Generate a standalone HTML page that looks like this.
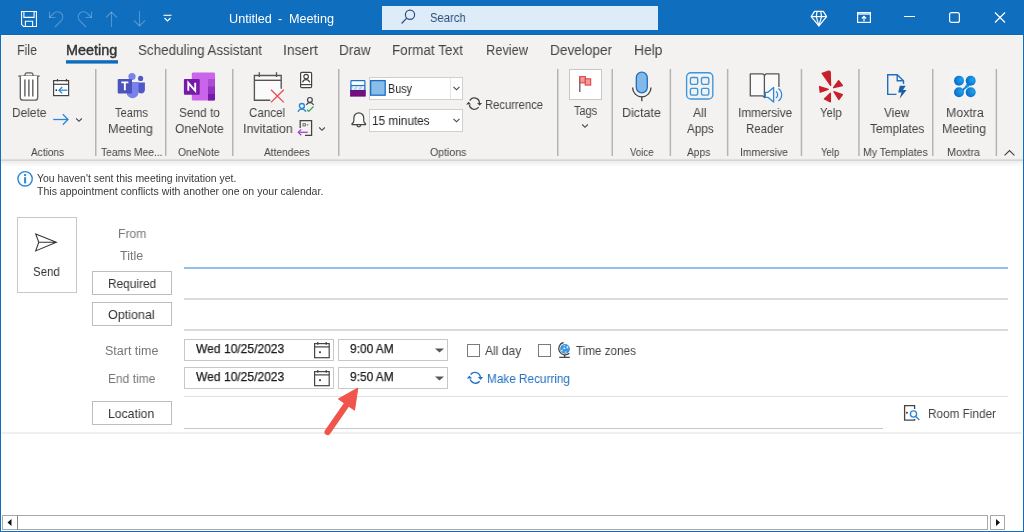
<!DOCTYPE html><html><head><meta charset="utf-8"><style>
html,body{margin:0;padding:0;width:1024px;height:532px;overflow:hidden;background:#fff}
.t{position:absolute;font-family:"Liberation Sans",sans-serif;line-height:1;white-space:nowrap;will-change:transform;transform-origin:0 0}
.b{position:absolute;box-sizing:border-box}
svg.b{overflow:visible}
</style></head><body>
<div class="b" style="left:0px;top:0px;width:1024px;height:35px;background:#106ebe"></div>
<div class="b" style="left:0px;top:34px;width:1024px;height:1px;background:#0b67b8"></div>
<div class="b" style="left:0px;top:35px;width:1024px;height:1px;background:#f7f6f5"></div>
<div class="b" style="left:0px;top:36px;width:1024px;height:122px;background:#f3f2f1"></div>
<div class="b" style="left:1px;top:158px;width:1022px;height:1px;background:#f1f0ef"></div>
<div class="b" style="left:1px;top:159px;width:1022px;height:1px;background:#e0dfde"></div>
<div class="b" style="left:1px;top:160px;width:1022px;height:1px;background:#d6d5d4"></div>
<div class="b" style="left:1px;top:161px;width:1022px;height:6px;background:linear-gradient(#eeedec,#ffffff)"></div>
<svg class="b" style="left:20px;top:10px" width="18" height="18" viewBox="0 0 18 18"><g fill="none" stroke="#ffffff" stroke-width="1.1">
<path d="M1.55 1.55 H16.45 V16.45 H3.5 L1.55 14.5 Z"/>
<path d="M3.9 1.55 V7.4 H14.1 V1.55"/>
<path d="M5.4 16.45 V11.3 H12.6 V16.45"/></g></svg>
<svg class="b" style="left:48px;top:10px" width="18" height="18" viewBox="0 0 18 18"><g fill="none" stroke="rgba(255,255,255,0.27)" stroke-width="1.1">
<path d="M1.5 1.5 V7.5 H7.5"/>
<path d="M1.5 7.5 L5.5 3.5 A5.2 5.2 0 0 1 13.5 10.5 L7 17"/></g></svg>
<svg class="b" style="left:76px;top:10px" width="18" height="18" viewBox="0 0 18 18"><g fill="none" stroke="rgba(255,255,255,0.27)" stroke-width="1.1" transform="translate(17,0) scale(-1,1)">
<path d="M1.5 1.5 V7.5 H7.5"/>
<path d="M1.5 7.5 L5.5 3.5 A5.2 5.2 0 0 1 13.5 10.5 L7 17"/></g></svg>
<svg class="b" style="left:104px;top:10px" width="16" height="18" viewBox="0 0 16 18"><g fill="none" stroke="rgba(255,255,255,0.27)" stroke-width="1.1">
<path d="M7.5 2 V17"/><path d="M2 7.5 L7.5 2 L13 7.5"/></g></svg>
<svg class="b" style="left:131px;top:10px" width="16" height="18" viewBox="0 0 16 18"><g fill="none" stroke="rgba(255,255,255,0.27)" stroke-width="1.1">
<path d="M8.5 1 V16"/><path d="M3 10.5 L8.5 16 L14 10.5"/></g></svg>
<svg class="b" style="left:162px;top:13px" width="12" height="10" viewBox="0 0 12 10"><g fill="none" stroke="#ffffff" stroke-width="1.1">
<path d="M1.5 2.3 H9.5"/><path d="M2.5 5 L5.5 8 L8.5 5"/></g></svg>
<div class="t" style="left:229.00px;top:13.00px;font-size:12.65px;color:#ffffff;">Untitled</div>
<div class="t" style="left:278.30px;top:13.00px;font-size:12.65px;color:#ffffff;">-</div>
<div class="t" style="left:288.61px;top:13.00px;font-size:12.65px;color:#ffffff;transform:scaleX(0.9930);">Meeting</div>
<div class="b" style="left:382px;top:6px;width:276px;height:24px;background:#deecf9"></div>
<svg class="b" style="left:400px;top:8px" width="18" height="18" viewBox="0 0 18 18"><g fill="none" stroke="#2b4f7e" stroke-width="1.2">
<circle cx="10" cy="6.8" r="4.6"/><path d="M6.7 10.1 L1.6 15.5"/></g></svg>
<div class="t" style="left:429.90px;top:12.00px;font-size:12.5px;color:#2b4f7e;transform:scaleX(0.9000);">Search</div>
<svg class="b" style="left:809px;top:9px" width="20" height="19" viewBox="0 0 20 19"><g fill="none" stroke="#ffffff" stroke-width="1.2" stroke-linejoin="round">
<path d="M5.5 2.4 H14.3 L17.6 7.6 L9.9 16.9 L2.2 7.6 Z"/>
<path d="M2.2 7.6 H17.6"/><path d="M8 2.4 L7.3 7.6 L9.9 16.9 L12.5 7.6 L11.8 2.4"/></g></svg>
<svg class="b" style="left:856px;top:11px" width="16" height="13" viewBox="0 0 16 13"><g fill="none" stroke="#ffffff" stroke-width="1.2">
<rect x="1.6" y="1.6" width="12.8" height="9.8"/>
<path d="M8 10.5 V5.5"/><path d="M5.8 7.5 L8 5.3 L10.2 7.5"/></g>
<rect x="1.6" y="1.6" width="12.8" height="2.4" fill="#ffffff" opacity="0.65"/></svg>
<div class="b" style="left:904px;top:16px;width:11px;height:1.3px;background:#ffffff"></div>
<svg class="b" style="left:948px;top:11px" width="13" height="13" viewBox="0 0 13 13"><rect x="1.6" y="1.6" width="9.8" height="9.8" rx="2" fill="none" stroke="#ffffff" stroke-width="1.2"/></svg>
<svg class="b" style="left:993px;top:11px" width="14" height="13" viewBox="0 0 14 13"><path d="M2 1.5 L12 11.5 M12 1.5 L2 11.5" stroke="#ffffff" stroke-width="1.2" fill="none"/></svg>
<div class="t" style="left:17.44px;top:43.00px;font-size:14.39px;color:#444444;transform:scaleX(0.8591);">File</div>
<div class="t" style="left:137.57px;top:43.00px;font-size:14.39px;color:#444444;transform:scaleX(0.9341);">Scheduling Assistant</div>
<div class="t" style="left:282.84px;top:43.00px;font-size:14.39px;color:#444444;transform:scaleX(0.9629);">Insert</div>
<div class="t" style="left:338.56px;top:43.00px;font-size:14.39px;color:#444444;transform:scaleX(0.9394);">Draw</div>
<div class="t" style="left:392.26px;top:43.00px;font-size:14.39px;color:#444444;transform:scaleX(0.9373);">Format Text</div>
<div class="t" style="left:486.11px;top:43.00px;font-size:14.39px;color:#444444;transform:scaleX(0.8913);">Review</div>
<div class="t" style="left:550.45px;top:43.00px;font-size:14.39px;color:#444444;transform:scaleX(0.9469);">Developer</div>
<div class="t" style="left:634.04px;top:43.00px;font-size:14.39px;color:#444444;transform:scaleX(0.9607);">Help</div>
<div class="t" style="left:65.90px;top:43.00px;font-size:14.39px;color:#333333;transform:scaleX(1.0020);-webkit-text-stroke:0.4px #333333">Meeting</div>
<svg class="b" style="left:0;top:0" width="200" height="70"><rect x="66" y="60.2" width="52" height="3.4" fill="#0f6cbd"/></svg>
<svg class="b" style="left:0;top:0" width="1024" height="532"><rect x="95.0" y="69" width="1.5" height="87" fill="#b4b4b4"/><rect x="165.0" y="69" width="1.5" height="87" fill="#b4b4b4"/><rect x="232.0" y="69" width="1.5" height="87" fill="#b4b4b4"/><rect x="338.0" y="69" width="1.5" height="87" fill="#b4b4b4"/><rect x="557.0" y="69" width="1.5" height="87" fill="#b4b4b4"/><rect x="611.5" y="69" width="1.5" height="87" fill="#b4b4b4"/><rect x="669.6" y="69" width="1.5" height="87" fill="#b4b4b4"/><rect x="726.9" y="69" width="1.5" height="87" fill="#b4b4b4"/><rect x="800.7" y="69" width="1.5" height="87" fill="#b4b4b4"/><rect x="858.2" y="69" width="1.5" height="87" fill="#b4b4b4"/><rect x="932.0" y="69" width="1.5" height="87" fill="#b4b4b4"/><rect x="995.6" y="69" width="1.5" height="87" fill="#b4b4b4"/></svg>
<div class="t" style="left:31.20px;top:147.00px;font-size:11.05px;color:#444444;transform:scaleX(0.9111);">Actions</div>
<div class="t" style="left:100.70px;top:147.00px;font-size:11.05px;color:#444444;transform:scaleX(0.9277);">Teams Mee...</div>
<div class="t" style="left:178.30px;top:147.00px;font-size:11.05px;color:#444444;transform:scaleX(0.9409);">OneNote</div>
<div class="t" style="left:263.50px;top:147.00px;font-size:11.05px;color:#444444;transform:scaleX(0.9204);">Attendees</div>
<div class="t" style="left:430.00px;top:147.00px;font-size:11.05px;color:#444444;transform:scaleX(0.9553);">Options</div>
<div class="t" style="left:629.60px;top:147.00px;font-size:11.05px;color:#444444;transform:scaleX(0.8704);">Voice</div>
<div class="t" style="left:687.30px;top:147.00px;font-size:11.05px;color:#444444;transform:scaleX(0.9240);">Apps</div>
<div class="t" style="left:740.36px;top:147.00px;font-size:11.05px;color:#444444;transform:scaleX(0.9429);">Immersive</div>
<div class="t" style="left:820.80px;top:147.00px;font-size:11.05px;color:#444444;transform:scaleX(0.8667);">Yelp</div>
<div class="t" style="left:862.95px;top:147.00px;font-size:11.05px;color:#444444;transform:scaleX(0.9537);">My Templates</div>
<div class="t" style="left:947.12px;top:147.00px;font-size:11.05px;color:#444444;transform:scaleX(0.9788);">Moxtra</div>
<svg class="b" style="left:16px;top:70px" width="26" height="32" viewBox="0 0 26 32"><g fill="none" stroke="#5f5f5f" stroke-width="1.3">
<path d="M2.3 6.1 H23.6"/><path d="M9 6 V4.5 A2 2 0 0 1 11 2.8 H15 A2 2 0 0 1 17 4.5 V6"/>
<path d="M4.3 6.1 V27.5 A2.7 2.7 0 0 0 7 30.2 H19 A2.7 2.7 0 0 0 21.7 27.5 V6.1" fill="#fff"/>
<path d="M8.9 9.6 V26.5 M12.9 9.6 V26.5 M16.8 9.6 V26.5" stroke-width="1.4"/></g></svg>
<div class="t" style="left:12.29px;top:106.00px;font-size:13.08px;color:#444444;transform:scaleX(0.9111);">Delete</div>
<svg class="b" style="left:52px;top:78px" width="18" height="19" viewBox="0 0 18 19"><g fill="none" stroke="#444" stroke-width="1.2">
<rect x="1.6" y="2.6" width="15" height="15" fill="#fff"/>
<path d="M1.6 6.3 H16.6"/><path d="M5.5 1 V3.5 M14.5 1 V3.5"/></g>
<circle cx="4.3" cy="12.2" r="0.9" fill="#333"/>
<g fill="none" stroke="#2b88d8" stroke-width="1.3"><path d="M7 12.2 H15.3"/><path d="M10.2 9 L7 12.2 L10.2 15.4"/></g></svg>
<svg class="b" style="left:52px;top:112px" width="18" height="14" viewBox="0 0 18 14"><g fill="none" stroke="#2b88d8" stroke-width="1.3"><path d="M1.2 7.5 H16"/><path d="M10.8 2.3 L16 7.5 L10.8 12.7"/></g></svg>
<svg class="b" style="left:75px;top:117px" width="8" height="6" viewBox="0 0 8 6"><path d="M1.2 1.5 L4 4.3 L6.8 1.5" fill="none" stroke="#444" stroke-width="1.1"/></svg>
<svg class="b" style="left:116px;top:70px" width="32" height="30" viewBox="0 0 32 30">
<circle cx="16" cy="6.5" r="3.6" fill="#7b83eb"/>
<circle cx="24.6" cy="8.4" r="2.6" fill="#5059c9"/>
<path d="M21.3 12.6 H28.9 V19.5 A4 4 0 0 1 24.9 23.5 A4 4 0 0 1 21.3 21 Z" fill="#5059c9"/>
<path d="M10.6 12 H22.5 V22.2 A6 6 0 0 1 16.5 28.2 A6 6 0 0 1 10.6 22.2 Z" fill="#7b83eb"/>
<rect x="1.7" y="9.1" width="14.3" height="14.3" rx="1" fill="#4b53bc"/>
<path d="M5.3 12.4 H12.4 M8.85 12.4 V20.2" stroke="#fff" stroke-width="1.9" fill="none"/></svg>
<div class="t" style="left:114.80px;top:106.00px;font-size:13.08px;color:#444444;transform:scaleX(0.8553);">Teams</div>
<div class="t" style="left:108.04px;top:122.00px;font-size:13.08px;color:#444444;transform:scaleX(0.9644);">Meeting</div>
<svg class="b" style="left:182px;top:71px" width="35" height="31" viewBox="0 0 35 31">
<rect x="9.8" y="1.4" width="23.2" height="28.2" rx="1.3" fill="#ca64ea"/>
<rect x="26" y="8" width="7" height="7.3" fill="#ae4bd5"/>
<rect x="26" y="15.3" width="7" height="7.2" fill="#9332bf"/>
<path d="M26 22.5 H33 V28.3 A1.3 1.3 0 0 1 31.7 29.6 H26 Z" fill="#7719aa"/>
<rect x="1.9" y="7.9" width="15.8" height="15.9" rx="1" fill="#7719aa"/>
<path d="M6.3 19.8 V11.8 L13.2 19.8 V11.8" stroke="#fff" stroke-width="1.9" fill="none"/></svg>
<div class="t" style="left:178.89px;top:106.00px;font-size:13.08px;color:#444444;transform:scaleX(0.9068);">Send to</div>
<div class="t" style="left:174.57px;top:122.00px;font-size:13.08px;color:#444444;transform:scaleX(0.9314);">OneNote</div>
<svg class="b" style="left:252px;top:71px" width="34" height="33" viewBox="0 0 34 33"><g fill="none" stroke="#555" stroke-width="1.35">
<path d="M18.3 29.2 H2.4 V4.5 H29.2 V17.7" fill="#fafafa"/>
<path d="M2.4 9.3 H29.2"/><path d="M7.3 1.2 V6 M24.5 1.2 V6"/></g>
<path d="M19 18.7 L31.8 31.4 M31.8 18.7 L19 31.4" stroke="#e8474c" stroke-width="1.2" fill="none"/></svg>
<div class="t" style="left:249.41px;top:106.00px;font-size:13.08px;color:#444444;transform:scaleX(0.8872);">Cancel</div>
<div class="t" style="left:242.55px;top:122.00px;font-size:13.08px;color:#444444;transform:scaleX(0.9510);">Invitation</div>
<svg class="b" style="left:299px;top:71px" width="14" height="18" viewBox="0 0 14 18"><g fill="none" stroke="#444" stroke-width="1.2">
<rect x="1.6" y="1.4" width="11" height="15.2" rx="1.2" fill="#fff"/><path d="M1.6 13.6 H12.6"/>
<circle cx="7.1" cy="5.6" r="2.3"/><path d="M3.6 11.3 A3.6 3.6 0 0 1 10.6 11.3"/></g></svg>
<svg class="b" style="left:296px;top:95px" width="19" height="18" viewBox="0 0 19 18">
<g fill="none" stroke="#444" stroke-width="1.2"><circle cx="13.9" cy="4.9" r="2.4"/><path d="M10.3 9.9 A4 4 0 0 1 17.6 9.9"/></g>
<g fill="none" stroke="#2b88d8" stroke-width="1.4"><circle cx="5.9" cy="11" r="2.5" fill="#f3f2f1"/><path d="M2 16.8 A4.2 4.2 0 0 1 9.8 16.8"/></g>
<path d="M10.9 14.8 L12.7 16.4 L17.5 11.5" stroke="#3ba655" stroke-width="1.3" fill="none"/></svg>
<svg class="b" style="left:297px;top:119px" width="16" height="18" viewBox="0 0 16 18"><g fill="none" stroke="#444" stroke-width="1.25">
<path d="M3.2 9 V1.5 H14.6 V16.4 H8"/></g>
<rect x="6" y="4.7" width="2.4" height="2.2" fill="none" stroke="#666" stroke-width="0.9"/><path d="M9.8 5.9 H11.4" stroke="#666" stroke-width="1"/>
<g fill="none" stroke="#a349c8" stroke-width="1.3"><path d="M1.3 13.3 H10.8"/><path d="M4.2 10.4 L1.3 13.3 L4.2 16.2"/></g></svg>
<svg class="b" style="left:318px;top:126px" width="8" height="6" viewBox="0 0 8 6"><path d="M1.2 1.5 L4 4.3 L6.8 1.5" fill="none" stroke="#444" stroke-width="1.1"/></svg>
<svg class="b" style="left:349px;top:79px" width="19" height="19" viewBox="0 0 19 19">
<rect x="1.9" y="1.7" width="14" height="5" fill="#fff"/>
<rect x="1.4" y="6.6" width="15" height="5" fill="#bcdaf3"/>
<path d="M3.4 10.8 L5.6 7.2 M8 10.8 L10.2 7.2 M12.6 10.8 L14.8 7.2" stroke="#fff" stroke-width="1.1"/>
<rect x="1.9" y="1.7" width="14" height="9.9" rx="0.6" fill="none" stroke="#1f73c7" stroke-width="1.2"/>
<path d="M1.9 6.5 H15.9" stroke="#1f73c7" stroke-width="1.1"/>
<rect x="1.3" y="11.4" width="15.1" height="5.8" fill="#760d80" stroke="#5c0a66" stroke-width="0.6"/></svg>
<div class="b" style="left:369px;top:77px;width:94px;height:23px;background:#fff;border:1px solid #cfcfcf"></div>
<div class="b" style="left:450px;top:78px;width:1px;height:21px;background:#e6e6e6"></div>
<svg class="b" style="left:369px;top:79px" width="19" height="19" viewBox="0 0 19 19"><rect x="1.6" y="1.6" width="14.6" height="14.6" fill="#88bdea" stroke="#1b6ec2" stroke-width="1.3"/></svg>
<div class="t" style="left:387.72px;top:83.00px;font-size:12.21px;color:#262626;transform:scaleX(0.8846);">Busy</div>
<svg class="b" style="left:452px;top:85px" width="9" height="7" viewBox="0 0 9 7"><path d="M1.5 1.8 L4.5 4.8 L7.5 1.8" fill="none" stroke="#444" stroke-width="1.1"/></svg>
<svg class="b" style="left:349px;top:110px" width="19" height="20" viewBox="0 0 19 20"><path d="M3 14.6 V13.8 Q4.9 12.5 4.9 10.5 V7.7 A4.9 4.9 0 0 1 14.7 7.7 V10.5 Q14.7 12.5 16.6 13.8 V14.6 Z" fill="#fafafa" stroke="#444" stroke-width="1.2" stroke-linejoin="round"/>
<path d="M8 15 A1.8 1.8 0 0 0 11.6 15" fill="none" stroke="#444" stroke-width="1.2"/></svg>
<div class="b" style="left:369px;top:109px;width:94px;height:23px;background:#fff;border:1px solid #cfcfcf"></div>
<div class="t" style="left:371.93px;top:115.00px;font-size:12.21px;color:#262626;transform:scaleX(0.9655);">15 minutes</div>
<svg class="b" style="left:452px;top:117px" width="9" height="7" viewBox="0 0 9 7"><path d="M1.5 1.8 L4.5 4.8 L7.5 1.8" fill="none" stroke="#444" stroke-width="1.1"/></svg>
<svg class="b" style="left:462px;top:92px" width="26" height="22" viewBox="0 0 26 22"><g fill="none" stroke="#444" stroke-width="1.25">
<path d="M7.8 8.6 A5.1 5.1 0 0 1 17.4 11.3"/><path d="M16.6 15.2 A5.1 5.1 0 0 1 7.4 13.1"/></g>
<g fill="#444"><path d="M15.1 10.9 H20.1 L17.6 13.8 Z"/><path d="M4.1 12.5 H9.1 L6.6 9.7 Z"/></g></svg>
<div class="t" style="left:485.08px;top:99.00px;font-size:12.21px;color:#444444;transform:scaleX(0.9194);">Recurrence</div>
<div class="b" style="left:569px;top:69px;width:33px;height:31px;background:#fff;border:1px solid #c8c8c8"></div>
<svg class="b" style="left:577px;top:74px" width="16" height="20" viewBox="0 0 16 20"><path d="M2.8 2.5 V18" stroke="#666" stroke-width="1.4"/>
<rect x="2.9" y="2.6" width="5.5" height="6.3" fill="#f19a9a" stroke="#e03a3a" stroke-width="1"/>
<rect x="8.2" y="4.8" width="5.5" height="6.3" fill="#f19a9a" stroke="#e03a3a" stroke-width="1"/></svg>
<div class="t" style="left:574.00px;top:105.00px;font-size:12.5px;color:#444444;transform:scaleX(0.8731);">Tags</div>
<svg class="b" style="left:581px;top:123px" width="8" height="6" viewBox="0 0 8 6"><path d="M1.2 1.5 L4 4.3 L6.8 1.5" fill="none" stroke="#444" stroke-width="1.1"/></svg>
<svg class="b" style="left:630px;top:70px" width="24" height="33" viewBox="0 0 24 33"><rect x="6.3" y="2.2" width="11" height="20.6" rx="5.5" fill="#83b9e9" stroke="#1f6fc0" stroke-width="1.3"/>
<g fill="none" stroke="#444" stroke-width="1.35"><path d="M2.6 17.6 A9.2 9.2 0 0 0 21 17.6"/><path d="M11.8 26.6 V31.3"/></g></svg>
<div class="t" style="left:622.45px;top:106.00px;font-size:13.08px;color:#444444;transform:scaleX(0.9538);">Dictate</div>
<svg class="b" style="left:684px;top:70px" width="31" height="31" viewBox="0 0 31 31"><g fill="none" stroke="#3a96dd" stroke-width="1.35">
<rect x="2.6" y="2.7" width="26.2" height="26.3" rx="4.3"/>
<rect x="6.4" y="7.5" width="7.3" height="6.8" rx="1.5"/><rect x="17.5" y="7.5" width="7.3" height="6.8" rx="1.5"/>
<rect x="6.4" y="18.3" width="7.3" height="6.8" rx="1.5"/><rect x="17.5" y="18.3" width="7.3" height="6.8" rx="1.5"/></g></svg>
<div class="t" style="left:693.00px;top:106.00px;font-size:13.08px;color:#444444;transform:scaleX(0.9286);">All</div>
<div class="t" style="left:687.00px;top:122.00px;font-size:13.08px;color:#444444;transform:scaleX(0.8966);">Apps</div>
<svg class="b" style="left:744px;top:66px" width="40" height="40" viewBox="0 0 40 40"><path d="M20.4 9.4 L18.7 7.8 H6.3 V29.9 H18.2 L20.4 31.6 L34.9 25 V7.8 H22.2 Z" fill="#fafafa"/>
<g fill="none" stroke="#555" stroke-width="1.3" stroke-linejoin="round">
<path d="M20.4 9.4 L18.7 7.8 H6.3 V29.9 H18.2 Q19.9 30.1 20.4 31.6 V9.4 L22.2 7.8 H34.9 V21"/></g>
<path d="M21.3 26.3 H23.9 L29.6 21.4 V36 L23.9 31.3 H21.3 Z" fill="#fafafa" stroke="#2b88d8" stroke-width="1.3" stroke-linejoin="round"/>
<g fill="none" stroke="#2b88d8" stroke-width="1.2"><path d="M31.9 25.3 A4.2 4.2 0 0 1 31.9 32.1"/><path d="M34.4 22.5 A7.6 7.6 0 0 1 34.4 35"/></g></svg>
<div class="t" style="left:737.80px;top:106.00px;font-size:13.08px;color:#444444;transform:scaleX(0.8983);">Immersive</div>
<div class="t" style="left:746.12px;top:122.00px;font-size:13.08px;color:#444444;transform:scaleX(0.8762);">Reader</div>
<svg class="b" style="left:814px;top:66px" width="34" height="40" viewBox="0 0 34 40"><g fill="#c8202a" stroke="#c8202a" stroke-width="1.3" stroke-linejoin="round">
<path d="M8.2 7.4 L14.6 5.2 Q16 4.9 16.2 6.3 L16.6 19.4 Z"/>
<path d="M19.6 21.6 L24.6 14.6 L28.4 19.5 Z"/>
<path d="M5.6 20.5 L14.2 23.3 L6.2 26.2 Z"/>
<path d="M19.9 25.7 L28.4 28.6 L24.8 33.5 Z"/>
<path d="M16.4 27.3 L16.4 35.8 L10.4 33 Z"/></g></svg>
<div class="t" style="left:819.90px;top:106.00px;font-size:13.08px;color:#444444;transform:scaleX(0.8640);">Yelp</div>
<svg class="b" style="left:885px;top:72px" width="23" height="28" viewBox="0 0 23 28"><g fill="none" stroke="#1f6fc0" stroke-width="1.4">
<path d="M11.5 22.4 H2.7 V2.7 H12.2 L18.5 8.7 V12"/><path d="M12.2 2.9 V8.7 H18.4"/></g>
<path d="M14.8 13.8 H20.7 L18 18 H21.6 L14.6 26.8 L16.5 20.4 H13.2 Z" fill="#1a5fa8"/></svg>
<div class="t" style="left:883.80px;top:106.00px;font-size:13.08px;color:#444444;transform:scaleX(0.9000);">View</div>
<div class="t" style="left:869.50px;top:122.00px;font-size:13.08px;color:#444444;transform:scaleX(0.9119);">Templates</div>
<svg class="b" style="left:944px;top:66px" width="40" height="40" viewBox="0 0 40 40"><defs><radialGradient id="mx" cx="0.7" cy="0.4" r="0.8"><stop offset="0" stop-color="#1aa6ea"/><stop offset="1" stop-color="#0b5fc9"/></radialGradient>
<linearGradient id="mxb" x1="0" y1="1" x2="1" y2="0"><stop offset="0" stop-color="#0f78d8"/><stop offset="1" stop-color="#19a3e9"/></linearGradient></defs>
<rect x="5" y="4" width="31" height="31" rx="5" fill="#f5f4f3"/>
<path d="M17.5 23.5 Q21 22 22.5 18 L24 17 L26 19 L24.5 21 Q20.5 22.5 19 26 Z" fill="url(#mxb)"/>
<circle cx="15" cy="14.7" r="5" fill="url(#mx)"/><circle cx="26.7" cy="14.7" r="5" fill="url(#mx)"/>
<circle cx="15" cy="26.3" r="5" fill="url(#mx)"/><circle cx="26.7" cy="26.3" r="5" fill="url(#mx)"/></svg>
<div class="t" style="left:945.66px;top:106.00px;font-size:13.08px;color:#444444;transform:scaleX(0.9436);">Moxtra</div>
<div class="t" style="left:942.45px;top:122.00px;font-size:13.08px;color:#444444;transform:scaleX(0.9467);">Meeting</div>
<svg class="b" style="left:1003px;top:149px" width="13" height="8" viewBox="0 0 13 8"><path d="M1.6 6.4 L6.5 1.5 L11.4 6.4" fill="none" stroke="#444" stroke-width="1.2"/></svg>
<svg class="b" style="left:16px;top:170px" width="18" height="18" viewBox="0 0 18 18"><circle cx="9.1" cy="8.8" r="7.2" fill="none" stroke="#2b88d8" stroke-width="1.4"/>
<rect x="8.1" y="7.2" width="2" height="6.2" fill="#2b88d8"/><rect x="8.1" y="4.1" width="2" height="2" fill="#2b88d8"/></svg>
<div class="t" style="left:37.40px;top:174.00px;font-size:10.17px;color:#3a3a3a;transform:scaleX(1.0269);">You haven't sent this meeting invitation yet.</div>
<div class="t" style="left:37.40px;top:187.00px;font-size:10.17px;color:#3a3a3a;transform:scaleX(1.0371);">This appointment conflicts with another one on your calendar.</div>
<div class="b" style="left:17px;top:217px;width:60px;height:76px;border:1px solid #c8c8c8;background:#fff"></div>
<svg class="b" style="left:33px;top:231px" width="26" height="23" viewBox="0 0 26 23"><path d="M2.7 2.9 L23.4 11.3 L2.7 19.9 L5.8 11.3 Z M5.8 11.3 H23.4" fill="none" stroke="#333" stroke-width="1.05" stroke-linejoin="miter"/></svg>
<div class="t" style="left:32.82px;top:265.00px;font-size:13.08px;color:#333333;transform:scaleX(0.8793);">Send</div>
<div class="t" style="left:117.73px;top:228.00px;font-size:12.5px;color:#777777;transform:scaleX(0.9704);">From</div>
<div class="t" style="left:120.00px;top:250.00px;font-size:12.5px;color:#777777;transform:scaleX(0.9826);">Title</div>
<div class="b" style="left:92px;top:271px;width:80px;height:24px;border:1px solid #bdbdbd;background:#fff"></div>
<div class="t" style="left:107.67px;top:278.00px;font-size:12.79px;color:#333333;transform:scaleX(0.9280);">Required</div>
<div class="b" style="left:92px;top:302px;width:80px;height:24px;border:1px solid #bdbdbd;background:#fff"></div>
<div class="t" style="left:108.32px;top:309.00px;font-size:12.79px;color:#333333;transform:scaleX(0.9804);">Optional</div>
<div class="b" style="left:92px;top:401px;width:80px;height:24px;border:1px solid #bdbdbd;background:#fff"></div>
<div class="t" style="left:108.04px;top:408.00px;font-size:12.79px;color:#333333;transform:scaleX(0.9574);">Location</div>
<div class="b" style="left:184px;top:267px;width:824px;height:2px;background:#8fc1ec"></div>
<div class="b" style="left:184px;top:298px;width:824px;height:2px;background:#dadada"></div>
<div class="b" style="left:184px;top:329px;width:824px;height:2px;background:#dadada"></div>
<div class="b" style="left:184px;top:396px;width:824px;height:1px;background:#e0e0e0"></div>
<div class="b" style="left:184px;top:428px;width:699px;height:1.2px;background:#c8c8c8"></div>
<div class="b" style="left:1px;top:432px;width:1021px;height:2px;background:#efefef"></div>
<div class="t" style="left:104.61px;top:345.00px;font-size:12.5px;color:#777777;transform:scaleX(0.9923);">Start time</div>
<div class="t" style="left:107.79px;top:373.00px;font-size:12.5px;color:#777777;transform:scaleX(0.9594);">End time</div>
<div class="b" style="left:184px;top:339px;width:150px;height:22px;border:1px solid #c8c8c8;background:#fff"></div>
<div class="t" style="left:196.25px;top:343.00px;font-size:12.5px;color:#1a1a1a;transform:scaleX(0.9643);-webkit-text-stroke:0.25px #1a1a1a">Wed 10/25/2023</div>
<svg class="b" style="left:312px;top:341px" width="19" height="19" viewBox="0 0 19 19"><g fill="none" stroke="#444" stroke-width="1.2"><rect x="2.6" y="2.6" width="14.6" height="14.1"/><path d="M2.6 5.9 H17.2"/><path d="M5.8 1.1 V3.8 M14.2 1.1 V3.8"/></g><rect x="7.1" y="10.3" width="1.8" height="1.8" fill="#333"/></svg>
<div class="b" style="left:338px;top:339px;width:110px;height:22px;border:1px solid #c8c8c8;background:#fff"></div>
<div class="t" style="left:349.65px;top:343.00px;font-size:12.5px;color:#1a1a1a;transform:scaleX(0.9523);-webkit-text-stroke:0.25px #1a1a1a">9:00 AM</div>
<svg class="b" style="left:434px;top:347px" width="11" height="7" viewBox="0 0 11 7"><path d="M1 1.5 H10 L5.5 5.6 Z" fill="#555"/></svg>
<div class="b" style="left:184px;top:367px;width:150px;height:22px;border:1px solid #c8c8c8;background:#fff"></div>
<div class="t" style="left:196.25px;top:371.00px;font-size:12.5px;color:#1a1a1a;transform:scaleX(0.9643);-webkit-text-stroke:0.25px #1a1a1a">Wed 10/25/2023</div>
<svg class="b" style="left:312px;top:369px" width="19" height="19" viewBox="0 0 19 19"><g fill="none" stroke="#444" stroke-width="1.2"><rect x="2.6" y="2.6" width="14.6" height="14.1"/><path d="M2.6 5.9 H17.2"/><path d="M5.8 1.1 V3.8 M14.2 1.1 V3.8"/></g><rect x="7.1" y="10.3" width="1.8" height="1.8" fill="#333"/></svg>
<div class="b" style="left:338px;top:367px;width:110px;height:22px;border:1px solid #c8c8c8;background:#fff"></div>
<div class="t" style="left:349.65px;top:371.00px;font-size:12.5px;color:#1a1a1a;transform:scaleX(0.9523);-webkit-text-stroke:0.25px #1a1a1a">9:50 AM</div>
<svg class="b" style="left:434px;top:375px" width="11" height="7" viewBox="0 0 11 7"><path d="M1 1.5 H10 L5.5 5.6 Z" fill="#555"/></svg>
<div class="b" style="left:467px;top:344px;width:13px;height:13px;border:1px solid #7a7a7a;background:#fff"></div>
<div class="t" style="left:484.90px;top:345.00px;font-size:12.79px;color:#444;transform:scaleX(0.9474);">All day</div>
<div class="b" style="left:538px;top:344px;width:13px;height:13px;border:1px solid #7a7a7a;background:#fff"></div>
<svg class="b" style="left:554px;top:339px" width="20" height="22" viewBox="0 0 20 22"><circle cx="11" cy="9.9" r="4.9" fill="#3b95e0"/>
<g fill="#e6f2fc"><rect x="9.4" y="8.6" width="1.8" height="1.5"/><rect x="12.6" y="7.3" width="1.6" height="2"/><rect x="7.2" y="10.8" width="1.4" height="1.6"/><rect x="9.6" y="6.2" width="1.6" height="0.8"/><rect x="10.8" y="12.6" width="1.8" height="0.9"/></g>
<path d="M9.6 3.5 A6.3 6.3 0 1 0 15.3 14.3" fill="none" stroke="#444" stroke-width="1.3"/>
<path d="M10.6 16.1 V18.3 M5.2 18.3 H15.8" stroke="#444" stroke-width="1.3" fill="none"/></svg>
<div class="t" style="left:576.30px;top:345.00px;font-size:12.5px;color:#444;transform:scaleX(0.9328);">Time zones</div>
<svg class="b" style="left:462px;top:366px" width="26" height="22" viewBox="0 0 26 22"><g fill="none" stroke="#1f74c9" stroke-width="1.4">
<path d="M8.6 8.5 A5.5 5.5 0 0 1 18.4 11.4"/><path d="M17.7 15.2 A5.5 5.5 0 0 1 8.2 13.4"/></g>
<g fill="#1f74c9"><path d="M15.9 10.9 H21.2 L18.55 14 Z"/><path d="M4.8 12.6 H10.1 L7.45 9.5 Z"/></g></svg>
<div class="t" style="left:486.58px;top:373.00px;font-size:12.79px;color:#2070c0;transform:scaleX(0.9193);">Make Recurring</div>
<svg class="b" style="left:903px;top:404px" width="19" height="18" viewBox="0 0 19 18"><path d="M1.6 1.6 H11.6 V16.1 H1.6 Z" fill="#fff"/>
<path d="M11.6 5 V1.6 H1.6 V16.1 H11.6 V15" fill="none" stroke="#444" stroke-width="1.3"/>
<circle cx="3.9" cy="8.8" r="0.95" fill="#333"/>
<circle cx="10.5" cy="10" r="3.1" fill="#fff" stroke="#2b88d8" stroke-width="1.4"/><path d="M12.7 12.3 L16.4 15.9" stroke="#2b88d8" stroke-width="1.4"/></svg>
<div class="t" style="left:927.56px;top:408.00px;font-size:12.5px;color:#444;transform:scaleX(0.9408);">Room Finder</div>
<svg class="b" style="left:318px;top:380px" width="48" height="60" viewBox="0 0 48 60"><path d="M9.6 51.9 L33.2 18" stroke="#f0544a" stroke-width="6.2" stroke-linecap="round" fill="none"/>
<path d="M39.8 8.1 L20.4 18.9 L36.5 30.2 Z" fill="#f0544a" stroke="#f0544a" stroke-width="1" stroke-linejoin="round"/></svg>
<div class="b" style="left:2px;top:515px;width:986px;height:15px;border:1px solid #a8a8a8;background:#fff"></div>
<div class="b" style="left:17px;top:515px;width:1px;height:15px;background:#8a8a8a"></div>
<div class="b" style="left:990px;top:515px;width:15px;height:15px;border:1px solid #a8a8a8;background:#fff"></div>
<svg class="b" style="left:6px;top:518px" width="8" height="9" viewBox="0 0 8 9"><path d="M1.5 4.5 L5.5 1 V8 Z" fill="#111"/></svg>
<svg class="b" style="left:994px;top:518px" width="8" height="9" viewBox="0 0 8 9"><path d="M6 4.5 L2 1 V8 Z" fill="#111"/></svg>
<div class="b" style="left:0px;top:0px;width:1px;height:532px;background:#106ebe"></div>
<div class="b" style="left:1023px;top:0px;width:1px;height:532px;background:#106ebe"></div>
<div class="b" style="left:0px;top:531px;width:1024px;height:1px;background:#106ebe"></div>
</body></html>
